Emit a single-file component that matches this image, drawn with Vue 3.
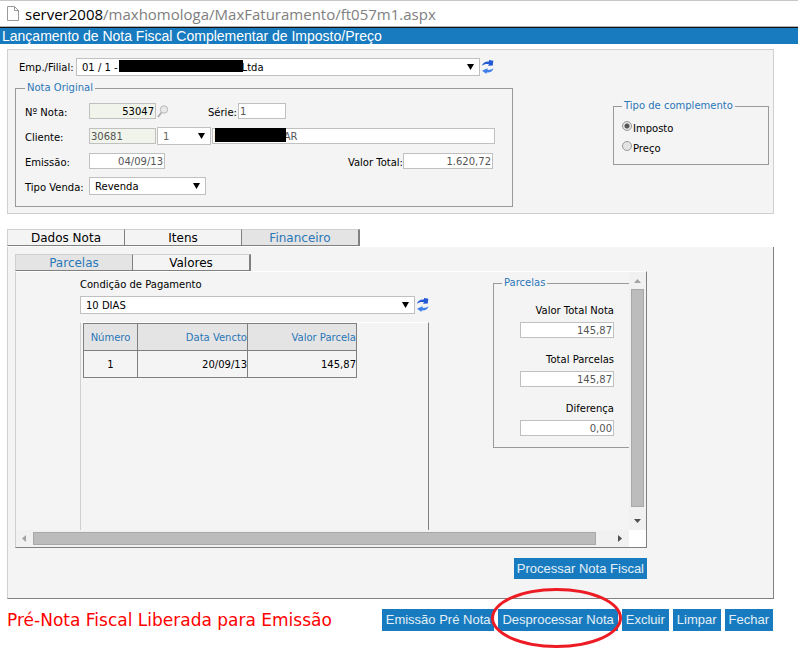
<!-- ComplementaryInvoice -->

<script setup>
  import { ref } from 'vue'

  const blank = size => '\u00a0'.repeat ( size )

  const company = ref ( `01 / 1 -${ blank ( 39 ) }Ltda` )
  const customer_name = ref ( `I${ blank ( 21 ) }AR` )
  const note_number = ref ( '53047' )
  const series = ref ( '1' )
  const customer = ref ( '30681' )
  const branch = ref ( '1' )
  const issue_date = ref ( '04/09/13' )
  const total = ref ( '1.620,72' )
  const sale_type = ref ( 'Revenda' )
  const complement = ref ( 'Imposto' )
  const payment = ref ( '10 DIAS' )

  const tabs = ['Dados Nota', 'Itens', 'Financeiro']
  const active_tab = ref ( 'Financeiro' )

  const sub_tabs = ['Parcelas', 'Valores']
  const active_sub_tab = ref ( 'Parcelas' )

  const installments = [
    { number: 1, date: '20/09/13', value: '145,87' },
  ]

  const totals = ref ([
    { id: 'note_total', label: 'Valor Total Nota', value: '145,87' },
    { id: 'installments_total', label: 'Total Parcelas', value: '145,87' },
    { id: 'difference', label: 'Diferença', value: '0,00' },
  ])

  const actions = [
    { label: 'Emissão Pré Nota' },
    { label: 'Desprocessar Nota', marked: true },
    { label: 'Excluir' },
    { label: 'Limpar' },
    { label: 'Fechar' },
  ]
</script>

<template>
  <div class="page">
    <div class="address_bar">
      <svg class="file_icon" viewBox="0 0 12 15">
        <path d="M.5 .5H7.5L11.5 4.5V14.5H.5Z" fill="#fff" stroke="#999" />
        <path d="M7.5 .5V4.5H11.5" fill="none" stroke="#999" />
      </svg>
      <span class="host">server2008</span><span class="path">/maxhomologa/MaxFaturamento/ft057m1.aspx</span>
    </div>
    <h1 class="title">Lançamento de Nota Fiscal Complementar de Imposto/Preço</h1>

    <main>
      <section class="header_panel">
        <div class="header_main">
          <div class="company_row">
            <label for="company">Emp./Filial:</label>
            <span class="select grow">
              <select id="company" v-model="company">
                <option>{{ company }}</option>
              </select>
              <span class="redacted company_redacted"></span>
            </span>
            <button class="icon_btn" aria-label="Atualizar">
              <svg class="refresh_icon" viewBox="0 0 12 14">
                <path d="M0 5.8C.6 3 3 1.3 7 1.5V0L11.3 .8L10.8 5.6L6 5.8L7 4.2C4.5 3.6 2 4.2 0 5.8Z" fill="#2259d4" />
                <path d="M11.5 8.2C10.9 11 8.5 12.7 4.5 12.5V14L0 10.8L5.5 8.2V9.8C7.5 10.2 9.5 9.6 11.5 8.2Z" fill="#3f80ea" />
              </svg>
            </button>
          </div>

          <fieldset class="note">
            <legend>Nota Original</legend>
            <div class="row">
              <label class="first" for="note_number">Nº Nota:</label>
              <input id="note_number" class="code right dark" v-model="note_number">
              <button class="icon_btn search_btn" aria-label="Pesquisar">
                <svg class="search_icon" viewBox="0 0 12 13">
                  <path d="M4.5 7.5L1 12" stroke="#b0b0b0" stroke-width="2" />
                  <circle cx="7" cy="4.5" r="3.7" fill="#e8e8e8" stroke="#b8b8b8" />
                </svg>
              </button>
              <label class="series_label" for="series">Série:</label>
              <input id="series" class="series" v-model="series">
            </div>
            <div class="row">
              <label class="first" for="customer">Cliente:</label>
              <input id="customer" class="code" v-model="customer">
              <span class="select branch">
                <select v-model="branch" aria-label="Filial do cliente">
                  <option>1</option>
                </select>
              </span>
              <span class="customer_name">
                <input v-model="customer_name" aria-label="Nome do cliente">
                <span class="redacted name_redacted"></span>
              </span>
            </div>
            <div class="row">
              <label class="first" for="issue_date">Emissão:</label>
              <input id="issue_date" class="date right" v-model="issue_date">
              <label class="total_label" for="total">Valor Total:</label>
              <input id="total" class="total right" v-model="total">
            </div>
            <div class="row">
              <label class="first" for="sale_type">Tipo Venda:</label>
              <span class="select sale_type">
                <select id="sale_type" v-model="sale_type">
                  <option>Revenda</option>
                </select>
              </span>
            </div>
          </fieldset>
        </div>

        <fieldset class="complement">
          <legend>Tipo de complemento</legend>
          <label v-for="kind in ['Imposto', 'Preço']" :key="kind" class="radio">
            <input type="radio" name="complement" :value="kind" v-model="complement">
            <span>{{ kind }}</span>
          </label>
        </fieldset>
      </section>

      <nav class="tabs">
        <button
          v-for="tab in tabs"
          :key="tab"
          :class="{ active: tab === active_tab }"
          @click="active_tab = tab">
          {{ tab }}
        </button>
      </nav>

      <section class="tab_panel">
        <nav class="tabs">
          <button
            v-for="tab in sub_tabs"
            :key="tab"
            :class="{ active: tab === active_sub_tab }"
            @click="active_sub_tab = tab">
            {{ tab }}
          </button>
        </nav>

        <div class="scroll_panel">
          <div class="viewport">
            <div class="payment">
              <label for="payment">Condição de Pagamento</label>
              <div class="payment_row">
                <span class="select grow">
                  <select id="payment" v-model="payment">
                    <option>10 DIAS</option>
                  </select>
                </span>
                <button class="icon_btn" aria-label="Atualizar">
                  <svg class="refresh_icon" viewBox="0 0 12 14">
                    <path d="M0 5.8C.6 3 3 1.3 7 1.5V0L11.3 .8L10.8 5.6L6 5.8L7 4.2C4.5 3.6 2 4.2 0 5.8Z" fill="#2259d4" />
                    <path d="M11.5 8.2C10.9 11 8.5 12.7 4.5 12.5V14L0 10.8L5.5 8.2V9.8C7.5 10.2 9.5 9.6 11.5 8.2Z" fill="#3f80ea" />
                  </svg>
                </button>
              </div>
              <div class="grid_box">
                <table>
                  <thead>
                    <tr>
                      <th class="col_number">Número</th>
                      <th class="col_date">Data Vencto</th>
                      <th class="col_value">Valor Parcela</th>
                    </tr>
                  </thead>
                  <tbody>
                    <tr v-for="item in installments" :key="item.number">
                      <td class="col_number">{{ item.number }}</td>
                      <td>{{ item.date }}</td>
                      <td>{{ item.value }}</td>
                    </tr>
                  </tbody>
                </table>
              </div>
            </div>

            <fieldset class="totals">
              <legend>Parcelas</legend>
              <div v-for="item in totals" :key="item.id" class="total_field">
                <label :for="item.id">{{ item.label }}</label>
                <input :id="item.id" class="right" v-model="item.value">
              </div>
            </fieldset>
          </div>

          <div class="bar vertical">
            <svg viewBox="0 0 7 4"><path d="M0 4L3.5 0L7 4Z" fill="#a3a3a3" /></svg>
            <div class="thumb"></div>
            <svg viewBox="0 0 7 4"><path d="M0 0H7L3.5 4Z" fill="#505050" /></svg>
          </div>
          <div class="bar horizontal">
            <svg viewBox="0 0 4 7"><path d="M4 0V7L0 3.5Z" fill="#a3a3a3" /></svg>
            <div class="thumb"></div>
            <svg viewBox="0 0 4 7"><path d="M0 0L4 3.5L0 7Z" fill="#505050" /></svg>
          </div>
          <div class="corner"></div>
        </div>

        <div class="process">
          <button class="btn">Processar Nota Fiscal</button>
        </div>
      </section>

      <footer>
        <p class="status">Pré-Nota Fiscal Liberada para Emissão</p>
        <div class="actions">
          <span v-for="action in actions" :key="action.label" class="action">
            <button class="btn tall">{{ action.label }}</button>
            <span v-if="action.marked" class="marker"></span>
          </span>
        </div>
      </footer>
    </main>
  </div>
</template>

<style>
  body {
    background: #fff;
  }
</style>

<style scoped>
  .page {
    font: 10px/12px "DejaVu Sans", sans-serif;
    color: #000;
  }
  .page * {
    box-sizing: border-box;
  }

  .address_bar {
    display: flex;
    align-items: center;
    height: 27px;
    padding-left: 7px;
    border-top: 1px solid #c4c6ca;
    border-bottom: 1px solid #b4b4b4;
    font: 15px/24px "Open Sans", sans-serif;
  }
  .file_icon {
    width: 12px;
    height: 15px;
    margin-right: 6px;
  }
  .path {
    color: #808080;
  }

  .title {
    margin: 0;
    border-top: 1px solid #111;
    padding-left: 2px;
    background: #187bbf;
    color: #fff;
    font: 14px/16px "Liberation Sans", sans-serif;
  }

  main {
    padding: 5px 24px 24px 7px;
  }

  input,
  select {
    margin: 0;
    border: 1px solid #c0c0c0;
    border-radius: 0;
    background: #fff;
    font: inherit;
    outline: none;
  }
  input {
    height: 16px;
    padding: 0 1px;
    color: #555;
  }
  .right {
    text-align: right;
  }

  .select {
    position: relative;
    display: flex;
  }
  .select::after {
    content: "";
    position: absolute;
    top: 6px;
    right: 6px;
    width: 7px;
    height: 6px;
    background: #000;
    clip-path: polygon(0 0, 100% 0, 50% 100%);
    pointer-events: none;
  }
  .select select {
    appearance: none;
    width: 100%;
    height: 18px;
    padding: 2px 5px 0;
    color: #000;
  }
  .grow {
    flex: 1;
  }

  .redacted {
    position: absolute;
    top: 2px;
    background: #000;
  }
  .company_redacted {
    left: 43px;
    width: 124px;
    height: 12px;
  }
  .name_redacted {
    top: 0;
    left: 3px;
    width: 71px;
    height: 14px;
  }

  fieldset {
    min-width: 0;
    margin: 0;
    border: 1px solid #999;
  }
  legend {
    padding: 0 2px;
    color: #2a77b8;
  }

  .icon_btn {
    display: flex;
    padding: 0;
    border: 0;
    background: none;
  }
  .refresh_icon {
    width: 12px;
    height: 14px;
  }

  .header_panel {
    display: flex;
    justify-content: space-between;
    align-items: center;
    padding: 8px 4px 6px 7px;
    border: 1px solid #d0d0d0;
    background: #f4f4f4;
  }
  .header_main {
    flex: 0 1 498px;
  }
  .company_row {
    display: flex;
    align-items: center;
    gap: 2px;
    margin-bottom: 6px;
    padding: 0 19px 0 4px;
  }
  .company_row label {
    width: 55px;
    padding-top: 2px;
  }

  .note {
    padding: 8px 17px 11px 9px;
  }
  .row {
    display: flex;
    align-items: center;
    height: 18px;
  }
  .row + .row {
    margin-top: 7px;
  }
  .row label {
    padding-top: 3px;
    white-space: nowrap;
  }
  .row .first {
    width: 64px;
  }
  .code {
    width: 67px;
    background: #f0f4ea;
  }
  .dark {
    color: #000;
  }
  .search_btn {
    margin-left: 1px;
  }
  .search_icon {
    width: 12px;
    height: 13px;
  }
  .series_label {
    margin-left: 39px;
    width: 30px;
  }
  .series {
    width: 48px;
  }
  .branch {
    width: 54px;
    margin: 0 1px;
  }
  .branch select {
    color: #666;
  }
  .customer_name {
    position: relative;
    display: flex;
    flex: 1;
  }
  .customer_name input {
    width: 100%;
  }
  .date {
    width: 76px;
  }
  .total_label {
    margin-left: auto;
  }
  .total {
    width: 90px;
    margin-right: 2px;
  }
  .sale_type {
    width: 117px;
  }

  .complement {
    flex: 0 0 156px;
    padding: 7px 8px 5px;
  }
  .radio {
    display: flex;
    height: 20px;
  }
  .radio input {
    appearance: none;
    width: 10px;
    height: 10px;
    margin: 2px 1px 0 0;
    border: 1px solid #999;
    border-radius: 50%;
    background: #e4e4e4;
  }
  .radio input:checked {
    background: radial-gradient(circle, #555 0 2px, #e4e4e4 3px);
  }
  .radio span {
    padding-top: 4px;
  }

  .tabs {
    display: flex;
  }
  .tabs button {
    width: 117px;
    height: 17px;
    padding: 1px 0 0;
    border: 1px solid #808080;
    border-top-color: #d0d0d0;
    border-left: 0;
    background: #f4f4f4;
    color: #000;
    font: 12px/14px "DejaVu Sans", sans-serif;
  }
  .tabs button:first-child {
    width: 118px;
    border-left: 1px solid #d0d0d0;
  }
  .tabs button:last-child {
    width: 118px;
    border-right-width: 2px;
  }
  .tabs .active {
    background: #e4e4e4;
    color: #2a77b8;
  }
  main > .tabs {
    margin: 15px 0 1px;
  }

  .tab_panel {
    padding: 7px 126px 19px 7px;
    border: solid #808080;
    border-width: 0 1px 1px;
    border-left-color: #d0d0d0;
    background: #f4f4f4;
  }
  .scroll_panel {
    display: grid;
    grid-template-columns: minmax(0, 1fr) 17px;
    grid-template-rows: auto 17px;
    border: 1px solid #808080;
    border-top-color: #fff;
    border-left-color: #d0d0d0;
  }
  .viewport {
    display: flex;
    align-items: flex-start;
    justify-content: space-between;
    gap: 64px;
    padding-left: 64px;
    overflow: hidden;
  }
  .payment {
    flex: 1;
    padding-top: 7px;
  }
  .payment_row {
    display: flex;
    align-items: center;
    gap: 2px;
    margin: 5px 0 8px;
  }
  .grid_box {
    min-height: 208px;
    padding-left: 2px;
    border: solid #808080;
    border-width: 1px 1px 0;
    border-top-color: #fff;
    border-left-color: #d0d0d0;
  }

  table {
    border-collapse: collapse;
    table-layout: fixed;
    width: 274px;
  }
  th,
  td {
    height: 27px;
    padding: 2px 0 0;
    border: 1px solid #808080;
    font-weight: normal;
    text-align: right;
  }
  th {
    background: #e4e4e4;
    color: #2a77b8;
  }
  .col_number {
    width: 54px;
    text-align: center;
  }
  .col_date {
    width: 110px;
  }

  .totals {
    flex: 0 0 136px;
    margin-top: 5px;
    padding: 16px 15px 11px 8px;
    border-right: 0;
  }
  .total_field {
    display: flex;
    flex-direction: column;
    align-items: flex-end;
    gap: 5px;
  }
  .total_field + .total_field {
    margin-top: 16px;
  }
  .total_field input {
    width: 94px;
  }

  .bar {
    display: flex;
    align-items: center;
    background: #f1f1f1;
  }
  .thumb {
    flex: 1;
    border: 1px solid #a8a8a8;
    background: #bcbcbc;
  }
  .vertical {
    flex-direction: column;
    gap: 6px;
    padding: 7px 0;
  }
  .vertical svg {
    width: 7px;
    height: 4px;
  }
  .vertical .thumb {
    width: 13px;
    margin-bottom: 6px;
  }
  .horizontal {
    gap: 7px;
    padding: 0 7px 0 6px;
  }
  .horizontal svg {
    width: 4px;
    height: 7px;
  }
  .horizontal .thumb {
    height: 13px;
    margin-right: 15px;
  }
  .corner {
    background: #fff;
  }

  .process {
    display: flex;
    justify-content: flex-end;
    margin-top: 10px;
  }
  .btn {
    height: 21px;
    padding: 0 4px;
    border: 0;
    background: #187bbf;
    color: #e4f0f8;
    font: 13px/16px "Liberation Sans", sans-serif;
    white-space: nowrap;
  }
  .process .btn {
    padding: 0 3px;
  }
  .tall {
    height: 22px;
  }

  footer {
    display: flex;
    align-items: center;
    justify-content: space-between;
    padding: 10px 1px 0 0;
  }
  .status {
    margin: 0;
    color: #f00;
    font-size: 17px;
    line-height: 22px;
    white-space: nowrap;
  }
  .actions {
    display: flex;
    gap: 4px;
  }
  .action {
    position: relative;
    display: flex;
  }
  .marker {
    position: absolute;
    z-index: 1;
    top: -21px;
    left: -7px;
    right: -4px;
    height: 60px;
    border: 3px solid #ed1c24;
    border-radius: 50%;
    pointer-events: none;
  }
</style>
